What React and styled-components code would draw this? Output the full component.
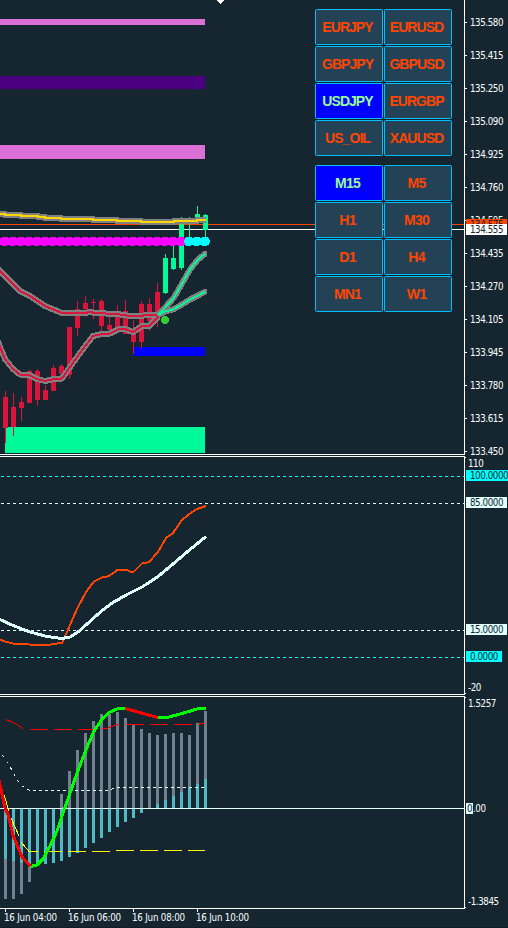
import React from "react";
import styled, { createGlobalStyle } from "styled-components";

const GlobalStyle = createGlobalStyle`
  * { box-sizing: border-box; }
  body { margin: 0; background: #152630; }
`;

const axisFont = `"DejaVu Sans Condensed", "DejaVu Sans", sans-serif`;

const Terminal = styled.main`
  display: flex;
  flex-direction: column;
  width: 508px;
  height: 928px;
  overflow: hidden;
  background: #152630;
  border-bottom: 1px solid #101d26;
  color: #fff;
  font-family: ${axisFont};
  font-stretch: condensed;
  font-size: 9.7px;
  letter-spacing: -0.42px;
  line-height: 11px;
`;

const Panel = styled.section`
  position: relative;
  display: grid;
  grid-template-columns: 465px 1fr;
  grid-template-rows: 100%;
  flex: none;
  height: ${(p) => p.$height}px;
  margin-bottom: ${(p) => (p.$last ? 0 : 1)}px;
`;

const Plot = styled.div`
  display: grid;
  grid-template-rows: 100%;
  border: solid #fff;
  border-width: ${(p) => (p.$first ? 0 : 1)}px 1px 1px 0;
  min-height: 0;
  overflow: hidden;
`;

const Chart = styled.svg`
  grid-area: 1 / 1;
  display: block;
  width: 464px;
  height: ${(p) => p.$height}px;
  shape-rendering: crispEdges;
`;

const Controls = styled.div`
  grid-area: 1 / 1;
  z-index: 1;
  justify-self: end;
  display: flex;
  flex-direction: column;
  gap: 9px;
  padding: 9px 12px 0 0;
`;

const ButtonGrid = styled.div`
  display: grid;
  grid-template-columns: 68px 68px;
  grid-auto-rows: 36px;
  gap: 1px;
`;

const ChartButton = styled.button`
  padding: 1px 3px 0 0;
  border: 1px solid #00bfff;
  border-radius: 1.5px;
  background: ${(p) => (p.$active ? "#0000ff" : "#244255")};
  color: ${(p) => (p.$active ? "#98fb98" : "#ff4500")};
  font: bold 14px/33px "Liberation Sans", Arial, sans-serif;
  letter-spacing: ${(p) => (p.$wide ? -0.95 : -0.8)}px;
  text-align: center;
  white-space: nowrap;
`;

const PriceScale = styled.div`
  padding-top: 6px;
`;

const PriceTick = styled.div`
  display: flex;
  align-items: center;
  gap: 3px;
  height: 33px;
  &::before {
    content: "";
    width: 2px;
    height: 1px;
    background: #fff;
  }
`;

const Tag = styled.div`
  position: absolute;
  left: 466px;
  top: ${(p) => p.$top}px;
  width: ${(p) => p.$width || 41}px;
  height: 11px;
  padding-left: ${(p) => p.$pad ?? 4}px;
  background: ${(p) => p.$bg};
  color: ${(p) => p.$color || "#152630"};
  white-space: nowrap;
`;

const endTick = "linear-gradient(#fff, #fff) no-repeat";

const Scale = styled.div`
  display: flex;
  flex-direction: column;
  justify-content: space-between;
  padding: 2px 0 2px 3px;
  background: ${endTick} 0 1px / 1px 1px, ${endTick} 0 calc(100% - 1px) / 1px 1px;
`;

const TimeScale = styled.footer`
  display: grid;
  grid-template-columns: repeat(4, 64px);
  height: 18px;
  padding-left: 4px;
  letter-spacing: -0.2px;
`;

const TimeLabel = styled.div`
  white-space: nowrap;
  &::before {
    content: "";
    display: block;
    width: 1px;
    height: 3px;
    margin-left: 1px;
    background: #fff;
  }
`;

const barX = (i) => 5 + i * 8;

// [body top, body bottom, wick top, wick bottom]
const candles = [
  [397, 428, 391, 443], [407, 427, 393, 436], [402, 408, 397, 421], [371, 403, 370, 403],
  [371, 400, 369, 406], [390, 400, 385, 400], [368, 391, 365, 391], [366, 374, 364, 374],
  [327, 375, 327, 379], [309, 328, 301, 336], [303, 309, 296, 317], [302, 303, 299, 319],
  [301, 326, 299, 332], [325, 330, 315, 330], [316, 328, 305, 328], [311, 334, 300, 334],
  [333, 342, 320, 354], [304, 342, 301, 348], [304, 321, 298, 331], [292, 320, 283, 327],
  [258, 293, 254, 294], [258, 269, 245, 270], [219, 268, 217, 270], [219, 220, 217, 240],
  [214, 218, 206, 222], [215, 230, 214, 240],
];

const goldAverage = "0,214 5,214 5,215 21,215 21,216 38,216 38,217 45,217 45,218 61,218 61,219 93,219 93,220 117,220 117,221 141,221 141,222 174,222 174,221 197,221 197,220 206,220";
const slowDown = "-3,268 0,271 20,291 30,296 45,306 62,313 85,313 90,312 95,313 117,314 130,316 142,316 145,315 158,315";
const slowUp = "158,315 165,311.5 173,309.5 181,305 190,299.5 198,295.5 205.5,291.5";
const fastDown = "-2,341 0,347 5,359 13,369 20,374.5 29,375 37,379 45,381 54,379 62,378.5 70,367 80,353 93,336 102,334 110,333.5 118,329.5 125,329 133,332 142,326 149,326 158,317";
const fastUp = "158,315 165,307.5 174,297.5 182,283.5 190,269.5 198,259.5 205.5,253.5";

const Average = ({ points, color }) => (
  <polyline points={points} fill="none" stroke={color} strokeWidth="2" />
);
const AverageEdge = ({ points }) => (
  <polyline points={points} fill="none" stroke="#808080" strokeWidth="6" strokeLinejoin="round" />
);
const AverageCap = ({ x, y }) => <circle cx={x} cy={y} r="2.5" fill="#808080" />;

const PriceChart = () => (
  <Chart $height={454} viewBox="0 0 464 454">
    <path d="M217 0h7v1h-1v1h-1v1h-1v1h-1v-1h-1v-1h-1v-1h-1z" fill="#fff" />
    <rect y="19" width="205" height="6" fill="#da70d6" />
    <rect y="76" width="205" height="13" fill="#4b0082" />
    <rect y="145" width="205" height="14" fill="#da70d6" />
    <rect x="133" y="347" width="72" height="9" fill="#0000ff" />
    <rect x="5" y="427" width="200" height="26" fill="#00fa9a" />
    <rect y="224" width="464" height="1" fill="#ff4500" />
    <rect y="229" width="464" height="1" fill="#fff" />
    {candles.map(([top, bottom, high, low], i) => (
      <g key={i} fill={i < 20 ? "#dc143c" : "#00fa9a"}>
        <rect x={barX(i)} y={high} width="1" height={low - high} />
        <rect x={barX(i) - 2} y={top} width="5" height={bottom - top} />
      </g>
    ))}
    <rect y="239" width="189" height="5" fill="#dc00c0" />
    {Array.from({ length: 27 }, (_, n) => n - 1).map((i) => (
      <circle key={i} cx={barX(i)} cy="241.5" r="4.8" fill={i < 23 ? "#ff00ff" : "#00ffff"} />
    ))}
    <circle cx="165" cy="320" r="4" fill="#32cd32" />
    {[goldAverage, slowDown, slowUp, fastDown, fastUp].map((points) => (
      <AverageEdge key={points} points={points} />
    ))}
    <AverageCap x="205" y="291.5" />
    <AverageCap x="205" y="253.5" />
    <Average points={goldAverage} color="#ffd700" />
    <Average points={slowDown} color="#dc143c" />
    <Average points={fastDown} color="#dc143c" />
    <Average points={slowUp} color="#00fa9a" />
    <Average points={fastUp} color="#00fa9a" />
  </Chart>
);

const levels = [[476, "#00ffff"], [503, "#e0ffff"], [630, "#e0ffff"], [657, "#00ffff"]];

const OscillatorChart = () => (
  <Chart $height={237} viewBox="0 457 464 237">
    {levels.map(([y, color]) => (
      <path key={y} d={`M1 ${y + 0.5}H464`} stroke={color} strokeDasharray="3 3" />
    ))}
    <polyline
      points="0,639.5 5,641.5 13,643.5 29,644.5 49,645 53,644 62,643 67,632 77,609 86,592 94,581.5 102,577.5 109,576 118,569.5 125,569.5 133,572.5 142,563.5 149,562 158,552 166,538 173,533 182,520 190,513.5 197,509 206,506"
      fill="none" stroke="#ff4500" strokeWidth="2"
    />
    <polyline
      points="0,619.5 13,625.5 30,632 47,636.5 62,638.5 70,637 78,632 87,624 102,610.5 113,602.5 127,594.5 142,587 158,576.5 173,564 190,549.5 206,536.5"
      fill="none" stroke="#e0ffff" strokeWidth="3"
    />
  </Chart>
);

const ZERO = 808;
const greyBars = [
  899, 899, 894, 882, null, null, null, 794, 771, 750, 733, 721, 714, 714, 712, 718, 724, 729,
  733, 735, 734, 733, 733, 735, 723, 711,
];
const tealBars = [
  859, 861, 863, 865, 865, 864, 863, 861, 857, 853, 848, 843, 838, 832, 827, 822, 818, 813,
  null, 804, 800, 796, 792, 787, 784, 779,
];

const Bars = ({ values, color }) =>
  values.map((v, i) =>
    v === null ? null : (
      <rect key={i} x={barX(i) - 1} y={Math.min(v, ZERO)} width="3" height={Math.abs(v - ZERO)} fill={color} />
    )
  );

const HistogramChart = () => (
  <Chart $height={211} viewBox="0 697 464 211">
    <Bars values={greyBars} color="#708090" />
    <Bars values={tealBars} color="#4fb9c6" />
    <rect y={ZERO} width="464" height="1" fill="#e0ffff" />
    <path
      d="M6 719.5L13 722.5L17 724.5L23 728.5M30 729.5H48M54 729.5H72M78 729.5H96M102 729L107 728.5L114 725.5L120 724.5M126 724.5H144M150 724.5H168M174 724.5H192M198 724.5L201 723.5H205"
      fill="none" stroke="#ff0000"
    />
    <path d="M2 755L4 757M7 762L8 763M10 767L12 770M14 774L15 776M17 780L19 782M22 786L24 787M27 789L30 790.5" stroke="#e0ffff" fill="none" />
    <path d="M33 790.5H106L114 788.5L118 787.5H205" fill="none" stroke="#e0ffff" strokeDasharray="3 3" />
    <path
      d="M4 795L9 811M11 818L19 836M21 842L29 851.5H38M44 851.5H62M68 851.5H86M92 851.5H110M116 850.5H134M140 850.5H158M164 850.5H182M188 850.5H205"
      fill="none" stroke="#ffff00"
    />
    <g fill="none" strokeWidth="3">
      <polyline points="30.5,866.5 37,865 43,859 50,846 57,831 63,813 68,799 77,773 86,750 93,733 102,719 109,712.5 117,709 125,708.5" stroke="#00ff00" />
      <polyline points="-1,780 5,808 8,815 13,835 22,857 30.5,866.5" stroke="#ff0000" />
      <polyline points="125,708.5 140,712.5 150,715.5 158,717.5" stroke="#ff0000" />
      <polyline points="158,717.5 167,717.5 182,713.5 197,709 206,708.5" stroke="#00ff00" />
    </g>
  </Chart>
);

const prices = [
  "135.580", "135.415", "135.250", "135.090", "134.925", "134.760", "134.595",
  "134.435", "134.270", "134.105", "133.945", "133.780", "133.615", "133.450",
];
const symbols = ["EURJPY", "EURUSD", "GBPJPY", "GBPUSD", "USDJPY", "EURGBP", "US_OIL", "XAUUSD"];
const timeframes = ["M15", "M5", "H1", "M30", "D1", "H4", "MN1", "W1"];
const times = ["16 Jun 04:00", "16 Jun 06:00", "16 Jun 08:00", "16 Jun 10:00"];

const Selector = ({ items, active, wide }) => (
  <ButtonGrid>
    {items.map((item) => (
      <ChartButton key={item} $active={item === active} $wide={wide}>{item}</ChartButton>
    ))}
  </ButtonGrid>
);

export default function App() {
  return (
    <>
      <GlobalStyle />
      <Terminal>
        <Panel $height={455}>
          <Plot $first>
            <PriceChart />
            <Controls>
              <Selector items={symbols} active="USDJPY" wide />
              <Selector items={timeframes} active="M15" />
            </Controls>
          </Plot>
          <PriceScale>
            {prices.map((price) => <PriceTick key={price}>{price}</PriceTick>)}
          </PriceScale>
          <Tag $top={219} $bg="#ff4500">134.575</Tag>
          <Tag $top={224} $bg="#fff">134.555</Tag>
        </Panel>
        <Panel $height={239}>
          <Plot><OscillatorChart /></Plot>
          <Scale><span>110</span><span>-20</span></Scale>
          <Tag $top={14} $bg="#00ffff" $width={42}>100.0000</Tag>
          <Tag $top={41} $bg="#e0ffff">85.0000</Tag>
          <Tag $top={168} $bg="#e0ffff">15.0000</Tag>
          <Tag $top={195} $bg="#00ffff" $width={36}>0.0000</Tag>
        </Panel>
        <Panel $height={213} $last>
          <Plot><HistogramChart /></Plot>
          <Scale><span>1.5257</span><span>-1.3845</span></Scale>
          <Tag $top={107} $bg="#e0ffff" $width={7} $pad={1}>0</Tag>
          <Tag $top={107} $bg="transparent" $color="#fff" $pad={7}>.00</Tag>
        </Panel>
        <TimeScale>
          {times.map((time) => <TimeLabel key={time}>{time}</TimeLabel>)}
        </TimeScale>
      </Terminal>
    </>
  );
}
